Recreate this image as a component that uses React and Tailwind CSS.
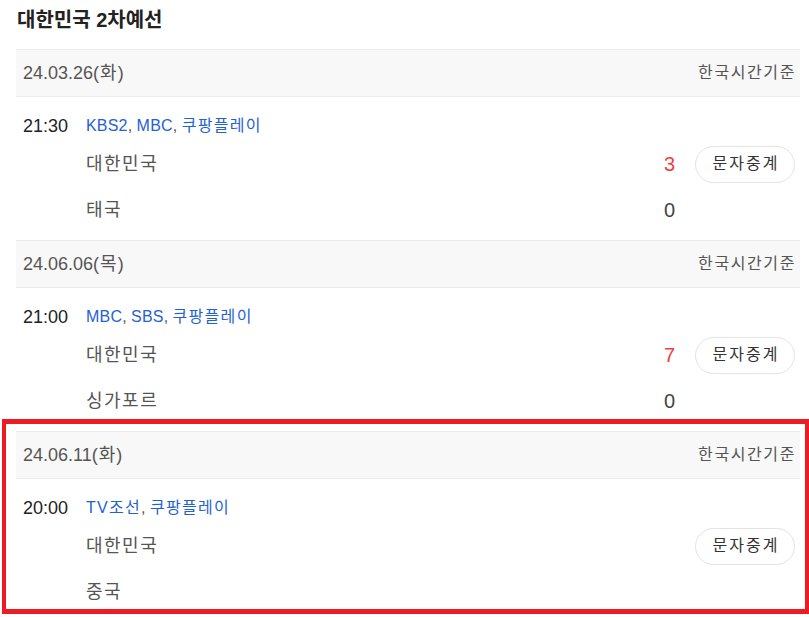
import React from "react";

const matches = [
  {
    date: "24.03.26(화)",
    time: "21:30",
    channels: ["KBS2", "MBC", "쿠팡플레이"],
    teams: [
      { name: "대한민국", score: "3", win: true },
      { name: "태국", score: "0" },
    ],
  },
  {
    date: "24.06.06(목)",
    time: "21:00",
    channels: ["MBC", "SBS", "쿠팡플레이"],
    teams: [
      { name: "대한민국", score: "7", win: true },
      { name: "싱가포르", score: "0" },
    ],
  },
  {
    date: "24.06.11(화)",
    time: "20:00",
    channels: ["TV조선", "쿠팡플레이"],
    teams: [{ name: "대한민국" }, { name: "중국" }],
    marked: true,
  },
];

const hangul = /[\uac00-\ud7a3]/;

function MatchSection({ match }) {
  return (
    <div className="relative">
      {/* date header */}
      <div className="h-[48px] flex items-center justify-between bg-[#f8f8f8] border-y border-[#ebebeb] pl-[7px] pr-[4px]">
        <span className="text-[18px] text-[#555]">
          {match.date.slice(0, -3)}
          <span className="tracking-[1px]">{match.date.slice(-3, -1)}</span>
          {match.date.slice(-1)}
        </span>
        <span className="text-[16px] text-[#555] tracking-[1.6px]">한국시간기준</span>
      </div>

      {/* body */}
      <div className="pt-[18px] pb-[7px] pl-[7px] pr-[5px]">
        <div className="h-[22px] flex items-center">
          <span className="w-[63px] text-[18px] text-[#222]">{match.time}</span>
          <span className="text-[16px] text-[#1f62d3]">
            {match.channels.map((c, i) => (
              <React.Fragment key={c}>
                {i > 0 && <span className="text-[#555]">, </span>}
                <span className={hangul.test(c) ? "tracking-[1.3px]" : "tracking-[0.2px]"}>{c}</span>
              </React.Fragment>
            ))}
          </span>
        </div>
        <div className="mt-[4px]">
          {match.teams.map((t, i) => (
            <div key={t.name} className="h-[46px] flex items-center">
              <span className="ml-[63px] flex-1 text-[18px] text-[#555] tracking-[1.5px]">{t.name}</span>
              <span
                className={
                  "w-[40px] text-right text-[20px] " +
                  (t.win ? "text-[#f53c3c]" : "text-[#444]")
                }
              >
                {t.score}
              </span>
              <div className="w-[120px] flex justify-end">
                {i === 0 && (
                  <button className="w-[100px] h-[37px] rounded-full border border-[#e3e3e3] bg-white text-[16px] text-[#333] tracking-[2px] pl-[2px]">
                    문자중계
                  </button>
                )}
              </div>
            </div>
          ))}
        </div>
      </div>

      {match.marked && (
        <div className="absolute left-[-14px] top-[-12px] w-[807px] h-[195px] border-x-[4px] border-y-[5px] border-[#ed1c24] pointer-events-none" />
      )}
    </div>
  );
}

export default function App() {
  return (
    <div
      className="w-[809px] h-[617px] overflow-hidden bg-white"
      style={{ fontFamily: '"Liberation Sans", "Noto Sans CJK KR", sans-serif' }}
    >
      <div className="ml-[16px] w-[784px]">
        <div className="h-[49px] flex items-center pb-[10px] pl-px">
          <h1 className="text-[20px] font-bold text-[#222]">대한민국 2차예선</h1>
        </div>
        {matches.map((m) => (
          <MatchSection key={m.date} match={m} />
        ))}
      </div>
    </div>
  );
}
